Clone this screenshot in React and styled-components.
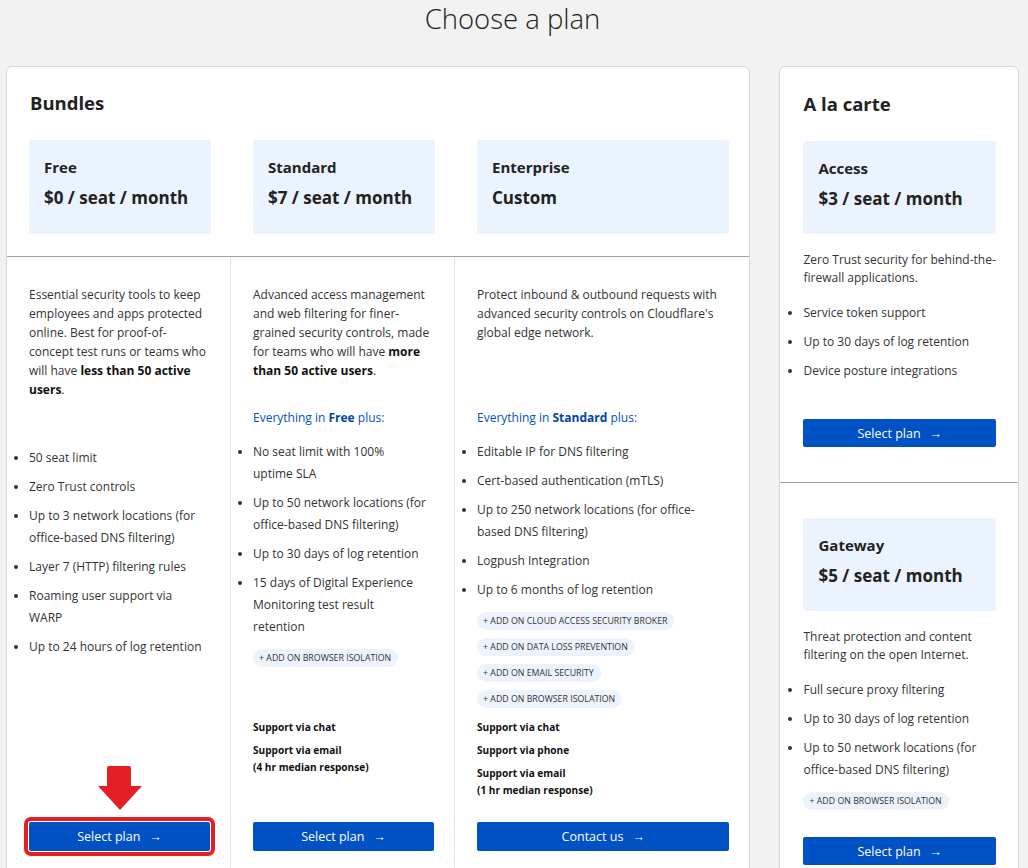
import React from "react";
import styled, { createGlobalStyle } from "styled-components";

const blue = "#0051c3";

const GlobalStyle = createGlobalStyle`
  body {
    margin: 0;
    background: #f2f2f2;
    font-family: "Open Sans", "Noto Sans", sans-serif;
    color: #222;
  }
  * { box-sizing: border-box; }
`;

const bundles = [
  {
    name: "Free",
    price: "$0 / seat / month",
    des: (
      <>
        Essential security tools to keep employees and apps protected online.
        Best for proof-of-concept test runs or teams who will have{" "}
        <b>less than 50 active users</b>.
      </>
    ),
    listOffset: 48,
    features: [
      "50 seat limit",
      "Zero Trust controls",
      "Up to 3 network locations (for office-based DNS filtering)",
      "Layer 7 (HTTP) filtering rules",
      "Roaming user support via WARP",
      "Up to 24 hours of log retention",
    ],
    addons: [],
    support: null,
    cta: "Select plan",
    highlight: true,
  },
  {
    name: "Standard",
    price: "$7 / seat / month",
    des: (
      <>
        Advanced access management and web filtering for finer-grained
        security controls, made for teams who will have{" "}
        <b>more than 50 active users</b>.
      </>
    ),
    base: "Free",
    features: [
      "No seat limit with 100% uptime SLA",
      "Up to 50 network locations (for office-based DNS filtering)",
      "Up to 30 days of log retention",
      "15 days of Digital Experience Monitoring test result retention",
    ],
    addons: ["Browser isolation"],
    support: [
      ["Support via chat"],
      ["Support via email", "(4 hr median response)"],
    ],
    cta: "Select plan",
  },
  {
    name: "Enterprise",
    price: "Custom",
    des: (
      <>
        Protect inbound &amp; outbound requests with advanced security controls
        on Cloudflare's global edge network.
      </>
    ),
    base: "Standard",
    features: [
      "Editable IP for DNS filtering",
      "Cert-based authentication (mTLS)",
      "Up to 250 network locations (for office-based DNS filtering)",
      "Logpush Integration",
      "Up to 6 months of log retention",
    ],
    addons: [
      "Cloud access security broker",
      "Data loss prevention",
      "Email security",
      "Browser isolation",
    ],
    support: [
      ["Support via chat"],
      ["Support via phone"],
      ["Support via email", "(1 hr median response)"],
    ],
    cta: "Contact us",
  },
];

const carte = [
  {
    name: "Access",
    price: "$3 / seat / month",
    des: "Zero Trust security for behind-the-firewall applications.",
    features: [
      "Service token support",
      "Up to 30 days of log retention",
      "Device posture integrations",
    ],
    addons: [],
  },
  {
    name: "Gateway",
    price: "$5 / seat / month",
    des: "Threat protection and content filtering on the open Internet.",
    features: [
      "Full secure proxy filtering",
      "Up to 30 days of log retention",
      "Up to 50 network locations (for office-based DNS filtering)",
    ],
    addons: ["Browser isolation"],
  },
];

const Page = styled.main`
  padding: 0 9px 0 6px;
`;

const Title = styled.h1`
  margin: 0 0 28px;
  text-align: center;
  font-size: 27.5px;
  line-height: 38px;
  font-weight: 300;
  color: #222;
`;

const Layout = styled.div`
  display: flex;
  align-items: flex-start;
  gap: 29px;
`;

const Card = styled.section`
  width: ${({ w }) => w}px;
  background: #fff;
  border: 1px solid #d8d8d8;
  border-radius: 6px;
`;

const CardTitle = styled.h2`
  margin: 0 0 ${({ mb }) => mb || 0}px;
  font-size: 18.5px;
  line-height: 24px;
  font-weight: 700;
  color: #222;
`;

const BundlesHead = styled.div`
  padding: 24px 23px 25px;
`;

const Grid = styled.div`
  display: grid;
  grid-template-columns: 224px 224px 1fr;
  border-top: ${({ ruled }) => (ruled ? "1px solid #a3a3a3" : "none")};
`;

const TopCell = styled.div`
  padding: 0 20px 22px 22px;
`;

const Cell = styled.div`
  display: flex;
  flex-direction: column;
  padding: 28px 20px 24px 22px;
  border-right: 1px solid #e2e2e2;
  &:last-child {
    border-right: none;
  }
`;

const PriceBox = styled.div`
  background: #ebf3fe;
  border-radius: 3px;
  padding: 17px 15px ${({ compact }) => (compact ? 23 : 24)}px;
`;

const PlanName = styled.div`
  font-size: 15px;
  line-height: 20px;
  font-weight: 700;
  color: #222;
`;

const Price = styled.div`
  margin-top: 9px;
  font-size: 17px;
  line-height: 24px;
  font-weight: 700;
  color: #222;
  white-space: nowrap;
`;

const Desc = styled.p`
  margin: ${({ m }) => m || "0"};
  min-height: ${({ minH }) => (minH ? `${minH}px` : "0")};
  font-size: 12px;
  line-height: ${({ lh }) => lh || 19}px;
  color: #333;
  b {
    color: #111;
  }
`;

const Includes = styled.div`
  margin: 11px 0 14px;
  font-size: 12px;
  line-height: 19px;
  color: ${blue};
  b {
    color: #0046a8;
  }
`;

const Features = styled.div`
  min-height: ${({ minH }) => (minH ? `${minH}px` : "0")};
  margin-top: ${({ offset }) => offset || 0}px;
`;

const List = styled.ul`
  margin: 0;
  padding: 0 7px 0 0;
  li {
    font-size: 12px;
    line-height: 22px;
    margin-bottom: 7px;
    color: #333;
  }
`;

const Pills = styled.div`
  display: flex;
  flex-direction: column;
  align-items: flex-start;
  gap: 8px;
  margin-top: 11px;
`;

const Pill = styled.span`
  display: inline-flex;
  align-items: center;
  height: 18px;
  padding: 0 7px 0 6px;
  border-radius: 9px;
  background: #edf3fc;
  font-size: 8.8px;
  text-transform: uppercase;
  color: #333;
  white-space: nowrap;
`;

const Support = styled.div`
  margin-top: 10px;
  padding-bottom: 17px;
  p {
    margin: 0 0 6px;
    font-size: 10.1px;
    line-height: 17px;
    font-weight: 700;
    color: #111;
  }
`;

const ButtonSlot = styled.div`
  position: relative;
  margin-top: ${({ mt }) => (mt === undefined ? "auto" : `${mt}px`)};
`;

const Button = styled.button`
  display: flex;
  align-items: center;
  justify-content: center;
  gap: 9px;
  width: 100%;
  height: ${({ h }) => h || 29}px;
  border: none;
  border-radius: 2px;
  background: ${blue};
  color: #fff;
  font-family: inherit;
  font-size: 12.5px;
  cursor: pointer;
  outline: ${({ highlight }) => (highlight ? "4px solid #e31e24" : "none")};
  outline-offset: 1px;
`;

const Arrow = styled.svg`
  position: absolute;
  left: 69px;
  top: -56px;
`;

const Section = styled.div`
  padding: ${({ pad }) => pad};
  border-top: ${({ ruled }) => (ruled ? "1px solid #a3a3a3" : "none")};
`;

const PointerArrow = () => (
  <Arrow width="44" height="45" viewBox="0 0 44 45">
    <path
      d="M11 0 H31 Q33 0 33 2 V20 H44 L22 44 L0 20 H9 V2 Q9 0 11 0 Z"
      fill="#e31e24"
    />
  </Arrow>
);

const Cta = ({ label, highlight, h, mt }) => (
  <ButtonSlot mt={mt}>
    {highlight && <PointerArrow />}
    <Button highlight={highlight} h={h}>
      <span>{label}</span>
      <span>→</span>
    </Button>
  </ButtonSlot>
);

const AddOns = ({ items }) =>
  items.length ? (
    <Pills>
      {items.map((a) => (
        <Pill key={a}>+ Add on {a}</Pill>
      ))}
    </Pills>
  ) : null;

export default function App() {
  return (
    <Page>
      <GlobalStyle />
      <Title>Choose a plan</Title>
      <Layout>
        <Card w={746}>
          <BundlesHead>
            <CardTitle>Bundles</CardTitle>
          </BundlesHead>
          <Grid>
            {bundles.map((p) => (
              <TopCell key={p.name}>
                <PriceBox>
                  <PlanName>{p.name}</PlanName>
                  <Price>{p.price}</Price>
                </PriceBox>
              </TopCell>
            ))}
          </Grid>
          <Grid ruled>
            {bundles.map((p) => (
              <Cell key={p.name}>
                <Desc minH={112}>{p.des}</Desc>
                {p.base && (
                  <Includes>
                    Everything in <b>{p.base}</b> plus:
                  </Includes>
                )}
                <Features minH={p.base ? 268 : 0} offset={p.listOffset}>
                  <List>
                    {p.features.map((f) => (
                      <li key={f}>{f}</li>
                    ))}
                  </List>
                  <AddOns items={p.addons} />
                </Features>
                {p.support && (
                  <Support>
                    {p.support.map((s) => (
                      <p key={s[0]}>
                        {s.map((line, i) => (
                          <React.Fragment key={line}>
                            {i > 0 && <br />}
                            {line}
                          </React.Fragment>
                        ))}
                      </p>
                    ))}
                  </Support>
                )}
                <Cta label={p.cta} highlight={p.highlight} />
              </Cell>
            ))}
          </Grid>
        </Card>

        <Card w={240}>
          {carte.map((p, i) => (
            <Section
              key={p.name}
              ruled={i > 0}
              pad={i === 0 ? "25px 22px 35px 23px" : "35px 22px 24px 23px"}
            >
              {i === 0 && <CardTitle mb={25}>A la carte</CardTitle>}
              <PriceBox compact>
                <PlanName>{p.name}</PlanName>
                <Price>{p.price}</Price>
              </PriceBox>
              <Desc m="17px 0 15px" lh={18}>
                {p.des}
              </Desc>
              <List>
                {p.features.map((f) => (
                  <li key={f}>{f}</li>
                ))}
              </List>
              <AddOns items={p.addons} />
              <Cta label="Select plan" h={28} mt={p.addons.length ? 27 : 37} />
            </Section>
          ))}
        </Card>
      </Layout>
    </Page>
  );
}
